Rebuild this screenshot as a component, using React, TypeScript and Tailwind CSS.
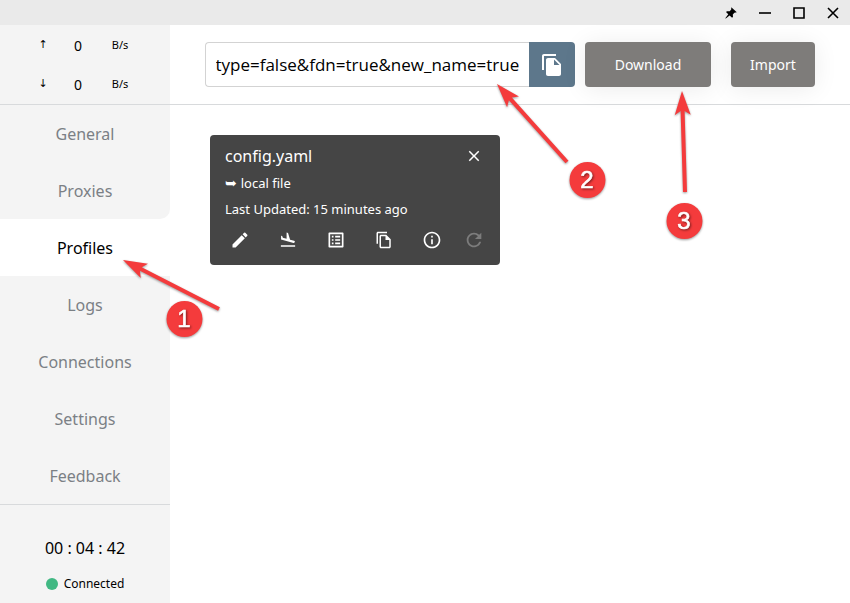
import React, { useEffect, useRef } from 'react'
import {
  MdClose,
  MdEdit,
  MdFileCopy,
  MdFlightLand,
  MdInfoOutline,
  MdOutlineFileCopy,
  MdOutlineListAlt,
  MdRefresh,
} from 'react-icons/md'

const menu = ['General', 'Proxies', 'Profiles', 'Logs', 'Connections', 'Settings', 'Feedback']

const steps = [
  { n: 1, x: 184, y: 319, from: [219, 309], to: [123, 260] },
  { n: 2, x: 587, y: 180, from: [567, 162], to: [497, 84] },
  { n: 3, x: 684, y: 221, from: [685, 192], to: [682, 91] },
]

function TitleBar() {
  return (
    <div className="flex h-[25px] items-center justify-end gap-4 bg-[#eaeaea] pr-2">
      <button aria-label="Pin">
        <svg width="18" height="18" viewBox="0 0 18 18">
          <path d="M9.3 3.2 14.8 8.2 12.4 8.7 10.8 10.6 11 13.2 9.8 13.6 7.6 11.5 3.8 14.6 3.3 14.2 6.3 10.3 4.2 8.2 4.7 7.2 7.7 7.2 9.2 5.6Z" />
        </svg>
      </button>
      <button aria-label="Minimize">
        <svg width="18" height="18" viewBox="0 0 18 18" stroke="#000" strokeWidth="1.6">
          <path d="M3 9H15" />
        </svg>
      </button>
      <button aria-label="Maximize">
        <svg width="18" height="18" viewBox="0 0 18 18" fill="none" stroke="#000" strokeWidth="1.6">
          <path d="M4 4H14V14H4Z" />
        </svg>
      </button>
      <button aria-label="Close">
        <svg width="18" height="18" viewBox="0 0 18 18" stroke="#000" strokeWidth="1.6">
          <path d="M4 4 14 14M14 4 4 14" />
        </svg>
      </button>
    </div>
  )
}

function Traffic({ arrow }: { arrow: string }) {
  return (
    <div className="grid h-[39px] grid-cols-[36px_34px_50px] items-center text-center">
      <span className="font-['DejaVu_Sans',sans-serif] text-[11px]">{arrow}</span>
      <span className="text-sm">0</span>
      <span className="text-[11px]">B/s</span>
    </div>
  )
}

function Sidebar() {
  return (
    <aside className="flex w-[170px] shrink-0 flex-col bg-[#f4f4f4]">
      <div className="h-20 border-b border-[#d8dadc] px-[25px] pt-px">
        <Traffic arrow="↑" />
        <Traffic arrow="↓" />
      </div>
      <nav className="border-b border-[#d8dadc] bg-white">
        {menu.map((item) => (
          <a
            key={item}
            href="#"
            className={`flex h-[57px] items-center justify-center text-base ${
              item === 'Profiles' ? 'bg-white text-black' : 'bg-[#f4f4f4] text-[#7b8085]'
            } ${item === 'Proxies' ? 'rounded-br-[10px]' : ''}`}
          >
            {item}
          </a>
        ))}
      </nav>
      <div className="flex flex-col items-center gap-3.5 pt-[31px]">
        <span className="text-base leading-6">00 : 04 : 42</span>
        <span className="flex items-center gap-1.5 text-xs leading-5">
          <i className="size-3 rounded-full bg-[#41b883]" />
          Connected
        </span>
      </div>
    </aside>
  )
}

function UrlBar() {
  const input = useRef<HTMLInputElement>(null)

  // keep the end of a long url in view
  useEffect(() => {
    if (input.current) input.current.scrollLeft = input.current.scrollWidth
  }, [])

  return (
    <header className="flex h-20 items-center border-b border-[#d8dadc] pl-[35px]">
      <input
        ref={input}
        type="text"
        aria-label="Profile URL"
        defaultValue="_type=false&fdn=true&new_name=true"
        className="h-[45px] w-[324px] rounded-l-sm border border-r-0 border-[#d3d3d3] bg-white px-2.5 font-['Open_Sans',sans-serif] text-[17px] text-black outline-none"
      />
      <button
        aria-label="Paste"
        className="flex h-[45px] w-[46px] items-center justify-center rounded-r-sm bg-[#5d778b] text-white"
      >
        <MdFileCopy className="size-6" />
      </button>
      <button className="ml-2.5 h-[45px] w-[126px] rounded-sm bg-[#7e7c7a] text-sm text-white shadow-[0_2px_24px_rgba(0,0,0,0.08)]">
        Download
      </button>
      <button className="ml-5 h-[45px] w-[84px] rounded-sm bg-[#7e7c7a] text-sm text-white shadow-[0_2px_24px_rgba(0,0,0,0.08)]">
        Import
      </button>
    </header>
  )
}

function ProfileCard() {
  return (
    <article className="mt-[30px] ml-10 w-[290px] rounded-sm bg-[#454545] px-[15px] pt-2 pb-3.5 text-white">
      <div className="flex h-[26px] items-center justify-between">
        <h3 className="text-base">config.yaml</h3>
        <button aria-label="Remove" className="mr-0.5">
          <MdClose className="size-[18px]" />
        </button>
      </div>
      <div className="pt-px text-[13px] leading-[26px]">
        <p className="flex gap-1">
          <span className="font-['DejaVu_Sans',sans-serif] text-sm leading-[26px]">➥</span>
          local file
        </p>
        <p>Last Updated: 15 minutes ago</p>
      </div>
      <div className="mt-[7px] -ml-[9px] grid grid-cols-[repeat(5,48px)_36px] items-center justify-items-center">
        <button aria-label="Edit"><MdEdit className="size-5" /></button>
        <button aria-label="Settings"><MdFlightLand className="size-[18px]" /></button>
        <button aria-label="Rules"><MdOutlineListAlt className="size-5" /></button>
        <button aria-label="Duplicate"><MdOutlineFileCopy className="size-[18px]" /></button>
        <button aria-label="Info"><MdInfoOutline className="size-5" /></button>
        <button aria-label="Update" disabled><MdRefresh className="size-[22px] text-[#7c7c7c]" /></button>
      </div>
    </article>
  )
}

// numbered arrows lying over the window
function Steps() {
  return (
    <svg className="pointer-events-none absolute top-0 left-0" width="850" height="603" viewBox="0 0 850 603">
      <g style={{ filter: 'drop-shadow(0 1px 1px rgba(0,0,0,0.4))' }}>
        {steps.map(({ n, x, y, from, to }) => {
          const dx = to[0] - from[0]
          const dy = to[1] - from[1]
          const len = Math.hypot(dx, dy)
          const angle = (Math.atan2(dy, dx) * 180) / Math.PI
          return (
            <g key={n} fill="#f43b3c">
              <g transform={`translate(${to[0]} ${to[1]}) rotate(${angle})`}>
                <path d={`M0 0 L-24 -8 L-20 -2 H${-len} V2 H-20 L-24 8 Z`} />
              </g>
              <circle cx={x + 0.5} cy={y} r="18" />
            </g>
          )
        })}
      </g>
      {steps.map(({ n, x, y }) => (
        <text
          key={n}
          x={x}
          y={y + 8}
          textAnchor="middle"
          fill="#fff"
          stroke="#fff"
          strokeWidth="0.6"
          fontSize="24"
          fontFamily="Liberation Sans, sans-serif"
          style={{ filter: 'drop-shadow(1px 1px 1px rgba(0,0,0,0.5))' }}
        >
          {n}
        </text>
      ))}
    </svg>
  )
}

export default function App() {
  return (
    <div className="relative flex min-h-screen flex-col bg-white font-['Noto_Sans',sans-serif] text-black">
      <TitleBar />
      <div className="flex flex-1">
        <Sidebar />
        <main className="min-w-0 flex-1">
          <UrlBar />
          <ProfileCard />
        </main>
      </div>
      <Steps />
    </div>
  )
}
